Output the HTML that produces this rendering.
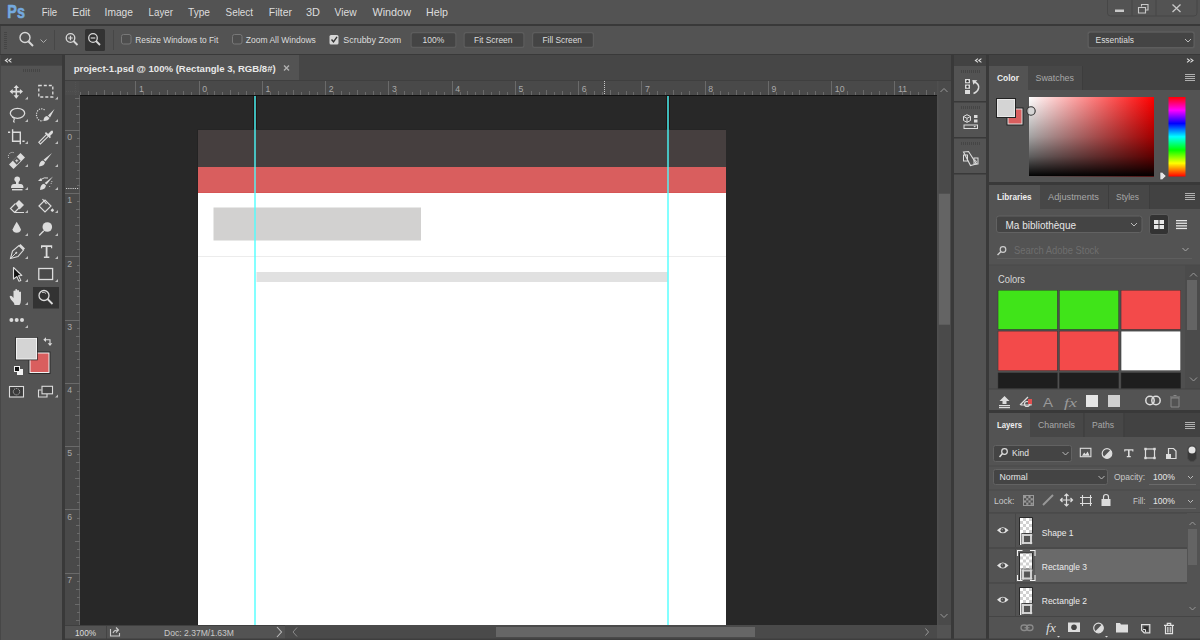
<!DOCTYPE html>
<html><head><meta charset="utf-8"><style>
html,body{margin:0;padding:0;width:1200px;height:640px;overflow:hidden;background:#535353}
svg{display:block;font-family:"Liberation Sans",sans-serif}
</style></head><body>
<svg width="1200" height="640" viewBox="0 0 1200 640" shape-rendering="auto">
<rect x="0" y="0" width="1200" height="640" fill="#535353" />
<rect x="0" y="24" width="1200" height="2" fill="#393939" />
<rect x="0" y="54" width="1200" height="1" fill="#393939" />
<rect x="0" y="26" width="1" height="28" fill="#444" />
<text x="7.3" y="17.6" font-size="18.6" font-weight="700" fill="#74a9de" stroke="#74a9de" stroke-width="0.6" stroke-linejoin="round" textLength="17.6" lengthAdjust="spacingAndGlyphs">Ps</text>
<text x="41.7" y="16" font-size="11.5" fill="#dddddd" textLength="15.5" lengthAdjust="spacingAndGlyphs">File</text>
<text x="72.3" y="16" font-size="11.5" fill="#dddddd" textLength="17.9" lengthAdjust="spacingAndGlyphs">Edit</text>
<text x="104.6" y="16" font-size="11.5" fill="#dddddd" textLength="28.4" lengthAdjust="spacingAndGlyphs">Image</text>
<text x="148.6" y="16" font-size="11.5" fill="#dddddd" textLength="24.4" lengthAdjust="spacingAndGlyphs">Layer</text>
<text x="188" y="16" font-size="11.5" fill="#dddddd" textLength="22" lengthAdjust="spacingAndGlyphs">Type</text>
<text x="225.6" y="16" font-size="11.5" fill="#dddddd" textLength="27.4" lengthAdjust="spacingAndGlyphs">Select</text>
<text x="268.8" y="16" font-size="11.5" fill="#dddddd" textLength="23.2" lengthAdjust="spacingAndGlyphs">Filter</text>
<text x="306" y="16" font-size="11.5" fill="#dddddd" textLength="14" lengthAdjust="spacingAndGlyphs">3D</text>
<text x="334.6" y="16" font-size="11.5" fill="#dddddd" textLength="22.0" lengthAdjust="spacingAndGlyphs">View</text>
<text x="372.4" y="16" font-size="11.5" fill="#dddddd" textLength="38.6" lengthAdjust="spacingAndGlyphs">Window</text>
<text x="426" y="16" font-size="11.5" fill="#dddddd" textLength="22" lengthAdjust="spacingAndGlyphs">Help</text>
<path d="M1107.5 0 V13 Q1107.5 16 1110.5 16 H1194 Q1197 16 1197 13 V0" fill="none" stroke="#474747" stroke-width="1"/>
<rect x="1131.5" y="0" width="1" height="16" fill="#474747" />
<rect x="1155.5" y="0" width="1" height="16" fill="#474747" />
<rect x="1115" y="9.5" width="9" height="2.5" fill="#c8c8c8" />
<path d="M1141.5 6.5 v-2 h6.5 v5.5 h-2 M1138.5 7.5 h7 v5.5 h-7 z" fill="none" stroke="#c8c8c8" stroke-width="1.1"/>
<path d="M1172.5 4.5 L1180.5 12 M1180.5 4.5 L1172.5 12" stroke="#c8c8c8" stroke-width="1.3"/>
<rect x="4" y="32" width="3" height="1" fill="#454545" />
<rect x="4" y="34" width="3" height="1" fill="#454545" />
<rect x="4" y="36" width="3" height="1" fill="#454545" />
<rect x="4" y="38" width="3" height="1" fill="#454545" />
<rect x="4" y="40" width="3" height="1" fill="#454545" />
<rect x="4" y="42" width="3" height="1" fill="#454545" />
<rect x="4" y="44" width="3" height="1" fill="#454545" />
<rect x="4" y="46" width="3" height="1" fill="#454545" />
<rect x="4" y="48" width="3" height="1" fill="#454545" />
<circle cx="25" cy="37.5" r="5" fill="none" stroke="#d8d8d8" stroke-width="1.4"/><path d="M28.5 41.5 L33 46" stroke="#d8d8d8" stroke-width="2"/>
<path d="M40.5 39.5 L43.5 42.5 L46.5 39.5" fill="none" stroke="#aaa" stroke-width="1"/>
<rect x="54" y="30" width="1" height="20" fill="#474747" />
<circle cx="70.5" cy="38" r="4.3" fill="none" stroke="#d8d8d8" stroke-width="1.3"/><path d="M73.5 41 L77.5 45" stroke="#d8d8d8" stroke-width="1.8"/><path d="M68.2 38 h4.6 M70.5 35.7 v4.6" stroke="#d8d8d8" stroke-width="1.2"/>
<rect x="85" y="29" width="20" height="22" fill="#333333" rx="1.5"/>
<circle cx="93" cy="38" r="4.3" fill="none" stroke="#d8d8d8" stroke-width="1.3"/><path d="M96 41 L100 45" stroke="#d8d8d8" stroke-width="1.8"/><path d="M90.7 38 h4.6" stroke="#d8d8d8" stroke-width="1.2"/>
<rect x="113" y="30" width="1" height="20" fill="#474747" />
<rect x="121.5" y="34.5" width="9.5" height="9.5" rx="2" fill="#4e4e4e" stroke="#787878" stroke-width="1"/>
<rect x="232.5" y="34.5" width="9.5" height="9.5" rx="2" fill="#4e4e4e" stroke="#787878" stroke-width="1"/>
<rect x="329.5" y="35" width="9" height="9.5" fill="#d6d6d6" rx="1.5"/>
<path d="M331.5 39.5 L333.5 41.8 L337 36.8" fill="none" stroke="#333" stroke-width="1.4"/>
<text x="135.3" y="43" font-size="9.2" fill="#dddddd" textLength="83" lengthAdjust="spacingAndGlyphs">Resize Windows to Fit</text>
<text x="245.8" y="43" font-size="9.2" fill="#dddddd" textLength="70" lengthAdjust="spacingAndGlyphs">Zoom All Windows</text>
<text x="343.3" y="43" font-size="9.2" fill="#dddddd" textLength="58" lengthAdjust="spacingAndGlyphs">Scrubby Zoom</text>
<rect x="410.5" y="32" width="46.0" height="16" rx="2.5" fill="#5d5d5d"/><rect x="411.7" y="33.2" width="43.6" height="13.6" rx="1.5" fill="#444444"/>
<text x="422.5" y="43" font-size="9.2" fill="#dddddd" textLength="21.7" lengthAdjust="spacingAndGlyphs">100%</text>
<rect x="463.5" y="32" width="61.0" height="16" rx="2.5" fill="#5d5d5d"/><rect x="464.7" y="33.2" width="58.6" height="13.6" rx="1.5" fill="#444444"/>
<text x="474" y="43" font-size="9.2" fill="#dddddd" textLength="38.5" lengthAdjust="spacingAndGlyphs">Fit Screen</text>
<rect x="532" y="32" width="62" height="16" rx="2.5" fill="#5d5d5d"/><rect x="533.2" y="33.2" width="59.6" height="13.6" rx="1.5" fill="#444444"/>
<text x="542.5" y="43" font-size="9.2" fill="#dddddd" textLength="39.5" lengthAdjust="spacingAndGlyphs">Fill Screen</text>
<rect x="1087.4" y="31.3" width="107.4" height="17.2" rx="2.5" fill="#5d5d5d"/><rect x="1088.8" y="32.7" width="104.6" height="14.4" rx="1.5" fill="#444444"/>
<text x="1095.5" y="43" font-size="9.2" fill="#dddddd" textLength="38.5" lengthAdjust="spacingAndGlyphs">Essentials</text>
<path d="M1185 39 L1188 42 L1191 39" fill="none" stroke="#bbb" stroke-width="1"/>
<rect x="0" y="55" width="62" height="11" fill="#424242" />
<path d="M8 58.6 L5.4 60.5 L8 62.4 M11.4 58.6 L8.8 60.5 L11.4 62.4" fill="none" stroke="#e0e0e0" stroke-width="1.05" stroke-linejoin="miter"/>
<rect x="62" y="55" width="3" height="585" fill="#393939" />
<rect x="0" y="55" width="1" height="585" fill="#474747" />
<rect x="0" y="65" width="62" height="1" fill="#474747" />
<rect x="23" y="69" width="1" height="3" fill="#454545" />
<rect x="25" y="69" width="1" height="3" fill="#454545" />
<rect x="27" y="69" width="1" height="3" fill="#454545" />
<rect x="29" y="69" width="1" height="3" fill="#454545" />
<rect x="31" y="69" width="1" height="3" fill="#454545" />
<rect x="33" y="69" width="1" height="3" fill="#454545" />
<rect x="35" y="69" width="1" height="3" fill="#454545" />
<rect x="37" y="69" width="1" height="3" fill="#454545" />
<rect x="39" y="69" width="1" height="3" fill="#454545" />
<rect x="65" y="55" width="886" height="25" fill="#464646" />
<rect x="65" y="55" width="234" height="25" fill="#535353" />
<text x="73.7" y="71.6" font-size="9.6" fill="#e8e8e8" textLength="202" lengthAdjust="spacingAndGlyphs" font-weight="700">project-1.psd @ 100% (Rectangle 3, RGB/8#)</text>
<path d="M284 65.5 L289 70.5 M289 65.5 L284 70.5" stroke="#b0b0b0" stroke-width="1.4"/>
<rect x="65" y="80" width="886" height="1" fill="#3f3f3f" />
<rect x="65" y="81" width="872" height="14" fill="#494949" />
<rect x="65" y="81" width="15" height="544" fill="#494949" />
<rect x="80" y="95" width="857" height="1" fill="#111" />
<rect x="65" y="81" width="14.5" height="14" fill="#4c4c4c" />
<path d="M66 91.5 H79 M75.5 82 V95" stroke="#525252" stroke-width="1" stroke-dasharray="1 1"/>
<rect x="79" y="95" width="1" height="530" fill="#5f5f5f" />
<rect x="80" y="96" width="857" height="529" fill="#282828" />
<rect x="80" y="92" width="1" height="3" fill="#6a6a6a" />
<rect x="88" y="91" width="1" height="4" fill="#6a6a6a" />
<rect x="96" y="92" width="1" height="3" fill="#6a6a6a" />
<rect x="104" y="90" width="1" height="5" fill="#6a6a6a" />
<rect x="112" y="92" width="1" height="3" fill="#6a6a6a" />
<rect x="120" y="91" width="1" height="4" fill="#6a6a6a" />
<rect x="127" y="92" width="1" height="3" fill="#6a6a6a" />
<rect x="135" y="81" width="1" height="14" fill="#6a6a6a" />
<rect x="143" y="92" width="1" height="3" fill="#6a6a6a" />
<rect x="151" y="91" width="1" height="4" fill="#6a6a6a" />
<rect x="159" y="92" width="1" height="3" fill="#6a6a6a" />
<rect x="167" y="90" width="1" height="5" fill="#6a6a6a" />
<rect x="175" y="92" width="1" height="3" fill="#6a6a6a" />
<rect x="183" y="91" width="1" height="4" fill="#6a6a6a" />
<rect x="191" y="92" width="1" height="3" fill="#6a6a6a" />
<text x="139.05" y="92.3" font-size="8.7" fill="#a8a8a8">1</text>
<rect x="199" y="81" width="1" height="14" fill="#6a6a6a" />
<rect x="207" y="92" width="1" height="3" fill="#6a6a6a" />
<rect x="214" y="91" width="1" height="4" fill="#6a6a6a" />
<rect x="222" y="92" width="1" height="3" fill="#6a6a6a" />
<rect x="230" y="90" width="1" height="5" fill="#6a6a6a" />
<rect x="238" y="92" width="1" height="3" fill="#6a6a6a" />
<rect x="246" y="91" width="1" height="4" fill="#6a6a6a" />
<rect x="254" y="92" width="1" height="3" fill="#6a6a6a" />
<text x="202.3" y="92.3" font-size="8.7" fill="#a8a8a8">0</text>
<rect x="262" y="81" width="1" height="14" fill="#6a6a6a" />
<rect x="270" y="92" width="1" height="3" fill="#6a6a6a" />
<rect x="278" y="91" width="1" height="4" fill="#6a6a6a" />
<rect x="286" y="92" width="1" height="3" fill="#6a6a6a" />
<rect x="293" y="90" width="1" height="5" fill="#6a6a6a" />
<rect x="301" y="92" width="1" height="3" fill="#6a6a6a" />
<rect x="309" y="91" width="1" height="4" fill="#6a6a6a" />
<rect x="317" y="92" width="1" height="3" fill="#6a6a6a" />
<text x="265.55" y="92.3" font-size="8.7" fill="#a8a8a8">1</text>
<rect x="325" y="81" width="1" height="14" fill="#6a6a6a" />
<rect x="333" y="92" width="1" height="3" fill="#6a6a6a" />
<rect x="341" y="91" width="1" height="4" fill="#6a6a6a" />
<rect x="349" y="92" width="1" height="3" fill="#6a6a6a" />
<rect x="357" y="90" width="1" height="5" fill="#6a6a6a" />
<rect x="365" y="92" width="1" height="3" fill="#6a6a6a" />
<rect x="373" y="91" width="1" height="4" fill="#6a6a6a" />
<rect x="380" y="92" width="1" height="3" fill="#6a6a6a" />
<text x="328.8" y="92.3" font-size="8.7" fill="#a8a8a8">2</text>
<rect x="388" y="81" width="1" height="14" fill="#6a6a6a" />
<rect x="396" y="92" width="1" height="3" fill="#6a6a6a" />
<rect x="404" y="91" width="1" height="4" fill="#6a6a6a" />
<rect x="412" y="92" width="1" height="3" fill="#6a6a6a" />
<rect x="420" y="90" width="1" height="5" fill="#6a6a6a" />
<rect x="428" y="92" width="1" height="3" fill="#6a6a6a" />
<rect x="436" y="91" width="1" height="4" fill="#6a6a6a" />
<rect x="444" y="92" width="1" height="3" fill="#6a6a6a" />
<text x="392.05" y="92.3" font-size="8.7" fill="#a8a8a8">3</text>
<rect x="452" y="81" width="1" height="14" fill="#6a6a6a" />
<rect x="460" y="92" width="1" height="3" fill="#6a6a6a" />
<rect x="467" y="91" width="1" height="4" fill="#6a6a6a" />
<rect x="475" y="92" width="1" height="3" fill="#6a6a6a" />
<rect x="483" y="90" width="1" height="5" fill="#6a6a6a" />
<rect x="491" y="92" width="1" height="3" fill="#6a6a6a" />
<rect x="499" y="91" width="1" height="4" fill="#6a6a6a" />
<rect x="507" y="92" width="1" height="3" fill="#6a6a6a" />
<text x="455.3" y="92.3" font-size="8.7" fill="#a8a8a8">4</text>
<rect x="515" y="81" width="1" height="14" fill="#6a6a6a" />
<rect x="523" y="92" width="1" height="3" fill="#6a6a6a" />
<rect x="531" y="91" width="1" height="4" fill="#6a6a6a" />
<rect x="539" y="92" width="1" height="3" fill="#6a6a6a" />
<rect x="546" y="90" width="1" height="5" fill="#6a6a6a" />
<rect x="554" y="92" width="1" height="3" fill="#6a6a6a" />
<rect x="562" y="91" width="1" height="4" fill="#6a6a6a" />
<rect x="570" y="92" width="1" height="3" fill="#6a6a6a" />
<text x="518.55" y="92.3" font-size="8.7" fill="#a8a8a8">5</text>
<rect x="578" y="81" width="1" height="14" fill="#6a6a6a" />
<rect x="586" y="92" width="1" height="3" fill="#6a6a6a" />
<rect x="594" y="91" width="1" height="4" fill="#6a6a6a" />
<rect x="602" y="92" width="1" height="3" fill="#6a6a6a" />
<rect x="610" y="90" width="1" height="5" fill="#6a6a6a" />
<rect x="618" y="92" width="1" height="3" fill="#6a6a6a" />
<rect x="626" y="91" width="1" height="4" fill="#6a6a6a" />
<rect x="633" y="92" width="1" height="3" fill="#6a6a6a" />
<text x="581.8" y="92.3" font-size="8.7" fill="#a8a8a8">6</text>
<rect x="641" y="81" width="1" height="14" fill="#6a6a6a" />
<rect x="649" y="92" width="1" height="3" fill="#6a6a6a" />
<rect x="657" y="91" width="1" height="4" fill="#6a6a6a" />
<rect x="665" y="92" width="1" height="3" fill="#6a6a6a" />
<rect x="673" y="90" width="1" height="5" fill="#6a6a6a" />
<rect x="681" y="92" width="1" height="3" fill="#6a6a6a" />
<rect x="689" y="91" width="1" height="4" fill="#6a6a6a" />
<rect x="697" y="92" width="1" height="3" fill="#6a6a6a" />
<text x="645.05" y="92.3" font-size="8.7" fill="#a8a8a8">7</text>
<rect x="705" y="81" width="1" height="14" fill="#6a6a6a" />
<rect x="713" y="92" width="1" height="3" fill="#6a6a6a" />
<rect x="720" y="91" width="1" height="4" fill="#6a6a6a" />
<rect x="728" y="92" width="1" height="3" fill="#6a6a6a" />
<rect x="736" y="90" width="1" height="5" fill="#6a6a6a" />
<rect x="744" y="92" width="1" height="3" fill="#6a6a6a" />
<rect x="752" y="91" width="1" height="4" fill="#6a6a6a" />
<rect x="760" y="92" width="1" height="3" fill="#6a6a6a" />
<text x="708.3" y="92.3" font-size="8.7" fill="#a8a8a8">8</text>
<rect x="768" y="81" width="1" height="14" fill="#6a6a6a" />
<rect x="776" y="92" width="1" height="3" fill="#6a6a6a" />
<rect x="784" y="91" width="1" height="4" fill="#6a6a6a" />
<rect x="792" y="92" width="1" height="3" fill="#6a6a6a" />
<rect x="799" y="90" width="1" height="5" fill="#6a6a6a" />
<rect x="807" y="92" width="1" height="3" fill="#6a6a6a" />
<rect x="815" y="91" width="1" height="4" fill="#6a6a6a" />
<rect x="823" y="92" width="1" height="3" fill="#6a6a6a" />
<text x="771.55" y="92.3" font-size="8.7" fill="#a8a8a8">9</text>
<rect x="831" y="81" width="1" height="14" fill="#6a6a6a" />
<rect x="839" y="92" width="1" height="3" fill="#6a6a6a" />
<rect x="847" y="91" width="1" height="4" fill="#6a6a6a" />
<rect x="855" y="92" width="1" height="3" fill="#6a6a6a" />
<rect x="863" y="90" width="1" height="5" fill="#6a6a6a" />
<rect x="871" y="92" width="1" height="3" fill="#6a6a6a" />
<rect x="879" y="91" width="1" height="4" fill="#6a6a6a" />
<rect x="886" y="92" width="1" height="3" fill="#6a6a6a" />
<text x="834.8" y="92.3" font-size="8.7" fill="#a8a8a8">10</text>
<rect x="894" y="81" width="1" height="14" fill="#6a6a6a" />
<rect x="902" y="92" width="1" height="3" fill="#6a6a6a" />
<rect x="910" y="91" width="1" height="4" fill="#6a6a6a" />
<rect x="918" y="92" width="1" height="3" fill="#6a6a6a" />
<rect x="926" y="90" width="1" height="5" fill="#6a6a6a" />
<rect x="934" y="92" width="1" height="3" fill="#6a6a6a" />
<text x="898.05" y="92.3" font-size="8.7" fill="#a8a8a8">11</text>
<path d="M604.5 81 V95" stroke="#c8c8c8" stroke-width="1" stroke-dasharray="1 1"/>
<rect x="75" y="98" width="5" height="1" fill="#6a6a6a" />
<rect x="77" y="106" width="3" height="1" fill="#6a6a6a" />
<rect x="76" y="114" width="4" height="1" fill="#6a6a6a" />
<rect x="77" y="122" width="3" height="1" fill="#6a6a6a" />
<rect x="65" y="130" width="15" height="1" fill="#6a6a6a" />
<rect x="77" y="138" width="3" height="1" fill="#6a6a6a" />
<rect x="76" y="146" width="4" height="1" fill="#6a6a6a" />
<rect x="77" y="154" width="3" height="1" fill="#6a6a6a" />
<rect x="75" y="162" width="5" height="1" fill="#6a6a6a" />
<rect x="77" y="170" width="3" height="1" fill="#6a6a6a" />
<rect x="76" y="178" width="4" height="1" fill="#6a6a6a" />
<rect x="77" y="185" width="3" height="1" fill="#6a6a6a" />
<text x="67.3" y="140.10000000000002" font-size="8.7" fill="#a8a8a8">0</text>
<rect x="65" y="193" width="15" height="1" fill="#6a6a6a" />
<rect x="77" y="201" width="3" height="1" fill="#6a6a6a" />
<rect x="76" y="209" width="4" height="1" fill="#6a6a6a" />
<rect x="77" y="217" width="3" height="1" fill="#6a6a6a" />
<rect x="75" y="225" width="5" height="1" fill="#6a6a6a" />
<rect x="77" y="233" width="3" height="1" fill="#6a6a6a" />
<rect x="76" y="241" width="4" height="1" fill="#6a6a6a" />
<rect x="77" y="249" width="3" height="1" fill="#6a6a6a" />
<text x="67.3" y="203.35000000000002" font-size="8.7" fill="#a8a8a8">1</text>
<rect x="65" y="256" width="15" height="1" fill="#6a6a6a" />
<rect x="77" y="265" width="3" height="1" fill="#6a6a6a" />
<rect x="76" y="272" width="4" height="1" fill="#6a6a6a" />
<rect x="77" y="280" width="3" height="1" fill="#6a6a6a" />
<rect x="75" y="288" width="5" height="1" fill="#6a6a6a" />
<rect x="77" y="296" width="3" height="1" fill="#6a6a6a" />
<rect x="76" y="304" width="4" height="1" fill="#6a6a6a" />
<rect x="77" y="312" width="3" height="1" fill="#6a6a6a" />
<text x="67.3" y="266.6" font-size="8.7" fill="#a8a8a8">2</text>
<rect x="65" y="320" width="15" height="1" fill="#6a6a6a" />
<rect x="77" y="328" width="3" height="1" fill="#6a6a6a" />
<rect x="76" y="336" width="4" height="1" fill="#6a6a6a" />
<rect x="77" y="344" width="3" height="1" fill="#6a6a6a" />
<rect x="75" y="351" width="5" height="1" fill="#6a6a6a" />
<rect x="77" y="359" width="3" height="1" fill="#6a6a6a" />
<rect x="76" y="367" width="4" height="1" fill="#6a6a6a" />
<rect x="77" y="375" width="3" height="1" fill="#6a6a6a" />
<text x="67.3" y="329.85" font-size="8.7" fill="#a8a8a8">3</text>
<rect x="65" y="383" width="15" height="1" fill="#6a6a6a" />
<rect x="77" y="391" width="3" height="1" fill="#6a6a6a" />
<rect x="76" y="399" width="4" height="1" fill="#6a6a6a" />
<rect x="77" y="407" width="3" height="1" fill="#6a6a6a" />
<rect x="75" y="415" width="5" height="1" fill="#6a6a6a" />
<rect x="77" y="423" width="3" height="1" fill="#6a6a6a" />
<rect x="76" y="431" width="4" height="1" fill="#6a6a6a" />
<rect x="77" y="438" width="3" height="1" fill="#6a6a6a" />
<text x="67.3" y="393.1" font-size="8.7" fill="#a8a8a8">4</text>
<rect x="65" y="446" width="15" height="1" fill="#6a6a6a" />
<rect x="77" y="454" width="3" height="1" fill="#6a6a6a" />
<rect x="76" y="462" width="4" height="1" fill="#6a6a6a" />
<rect x="77" y="470" width="3" height="1" fill="#6a6a6a" />
<rect x="75" y="478" width="5" height="1" fill="#6a6a6a" />
<rect x="77" y="486" width="3" height="1" fill="#6a6a6a" />
<rect x="76" y="494" width="4" height="1" fill="#6a6a6a" />
<rect x="77" y="502" width="3" height="1" fill="#6a6a6a" />
<text x="67.3" y="456.35" font-size="8.7" fill="#a8a8a8">5</text>
<rect x="65" y="509" width="15" height="1" fill="#6a6a6a" />
<rect x="77" y="518" width="3" height="1" fill="#6a6a6a" />
<rect x="76" y="525" width="4" height="1" fill="#6a6a6a" />
<rect x="77" y="533" width="3" height="1" fill="#6a6a6a" />
<rect x="75" y="541" width="5" height="1" fill="#6a6a6a" />
<rect x="77" y="549" width="3" height="1" fill="#6a6a6a" />
<rect x="76" y="557" width="4" height="1" fill="#6a6a6a" />
<rect x="77" y="565" width="3" height="1" fill="#6a6a6a" />
<text x="67.3" y="519.6" font-size="8.7" fill="#a8a8a8">6</text>
<rect x="65" y="573" width="15" height="1" fill="#6a6a6a" />
<rect x="77" y="581" width="3" height="1" fill="#6a6a6a" />
<rect x="76" y="589" width="4" height="1" fill="#6a6a6a" />
<rect x="77" y="597" width="3" height="1" fill="#6a6a6a" />
<rect x="75" y="604" width="5" height="1" fill="#6a6a6a" />
<rect x="77" y="612" width="3" height="1" fill="#6a6a6a" />
<rect x="76" y="620" width="4" height="1" fill="#6a6a6a" />
<text x="67.3" y="582.8499999999999" font-size="8.7" fill="#a8a8a8">7</text>
<path d="M66 188.5 H79" stroke="#c8c8c8" stroke-width="1" stroke-dasharray="1.2 1"/>
<rect x="197" y="129" width="1" height="496" fill="#232323" />
<rect x="197" y="129" width="529" height="1" fill="#252525" />
<rect x="198" y="130" width="528" height="495" fill="#ffffff" />
<rect x="198" y="130" width="528" height="37" fill="#463f3f" />
<rect x="198" y="167" width="528" height="26" fill="#d95e5e" />
<rect x="198" y="192" width="528" height="1" fill="#d65555" />
<rect x="213.5" y="207.5" width="207.5" height="33" fill="#d2d1d0" />
<rect x="198" y="256" width="528" height="1" fill="#ececec" />
<rect x="256.5" y="272" width="411" height="10" fill="#e1e1e1" />
<rect x="254" y="96" width="2" height="529" fill="#4affff" fill-opacity="0.68"/>
<rect x="667" y="96" width="2" height="529" fill="#4affff" fill-opacity="0.68"/>
<rect x="253" y="96" width="1" height="33" fill="#241414" />
<rect x="256" y="96" width="1" height="33" fill="#241414" />
<rect x="666" y="96" width="1" height="33" fill="#241414" />
<rect x="669" y="96" width="1" height="33" fill="#241414" />
<rect x="937" y="81" width="14" height="544" fill="#4a4a4a" />
<rect x="937" y="81" width="1.5" height="544" fill="#4f4f4f" />
<path d="M940.5 92 L944 88.5 L947.5 92" fill="none" stroke="#999" stroke-width="1"/>
<rect x="938.8" y="193.7" width="11.2" height="131" fill="#646464" />
<path d="M940.5 614 L944 617.5 L947.5 614" fill="none" stroke="#999" stroke-width="1"/>
<rect x="65" y="625" width="886" height="15" fill="#535353" />
<rect x="65" y="625" width="886" height="1" fill="#3f3f3f" />
<text x="75" y="636" font-size="9" fill="#dddddd" textLength="21" lengthAdjust="spacingAndGlyphs">100%</text>
<rect x="106" y="626" width="1" height="14" fill="#444" />
<path d="M110.5 629 v7 h9 v-3 M113 633 q1 -3 5 -3 M116 627.5 l2.5 2.5 l-2.5 2.5" fill="none" stroke="#ccc" stroke-width="1.1"/>
<text x="164" y="636" font-size="9" fill="#c8c8c8" textLength="70" lengthAdjust="spacingAndGlyphs">Doc: 2.37M/1.63M</text>
<path d="M277 627 L281.5 632 L277 637" fill="none" stroke="#bbb" stroke-width="1.1"/>
<rect x="285" y="625" width="652" height="15" fill="#4a4a4a" />
<rect x="937" y="625" width="14" height="15" fill="#535353" />
<path d="M297 627.5 L293 632 L297 636.5" fill="none" stroke="#888" stroke-width="1"/>
<rect x="496" y="627" width="259" height="10" fill="#666666" />
<path d="M925.5 628.5 L928.5 632 L925.5 635.5" fill="none" stroke="#999" stroke-width="1"/>
<rect x="951" y="55" width="3" height="585" fill="#393939" />
<rect x="954" y="55" width="32" height="11" fill="#424242" />
<path d="M978 58.6 L975.4 60.5 L978 62.4 M981.4 58.6 L978.8 60.5 L981.4 62.4" fill="none" stroke="#e0e0e0" stroke-width="1.05" stroke-linejoin="miter"/>
<rect x="986" y="55" width="3" height="585" fill="#393939" />
<rect x="954" y="101" width="32" height="1.5" fill="#393939" />
<rect x="954" y="137" width="32" height="1.5" fill="#393939" />
<rect x="954" y="173" width="32" height="1.5" fill="#393939" />
<rect x="961" y="70" width="1" height="3" fill="#454545" />
<rect x="963" y="70" width="1" height="3" fill="#454545" />
<rect x="965" y="70" width="1" height="3" fill="#454545" />
<rect x="967" y="70" width="1" height="3" fill="#454545" />
<rect x="969" y="70" width="1" height="3" fill="#454545" />
<rect x="971" y="70" width="1" height="3" fill="#454545" />
<rect x="973" y="70" width="1" height="3" fill="#454545" />
<rect x="975" y="70" width="1" height="3" fill="#454545" />
<rect x="977" y="70" width="1" height="3" fill="#454545" />
<rect x="979" y="70" width="1" height="3" fill="#454545" />
<rect x="961" y="106" width="1" height="3" fill="#454545" />
<rect x="963" y="106" width="1" height="3" fill="#454545" />
<rect x="965" y="106" width="1" height="3" fill="#454545" />
<rect x="967" y="106" width="1" height="3" fill="#454545" />
<rect x="969" y="106" width="1" height="3" fill="#454545" />
<rect x="971" y="106" width="1" height="3" fill="#454545" />
<rect x="973" y="106" width="1" height="3" fill="#454545" />
<rect x="975" y="106" width="1" height="3" fill="#454545" />
<rect x="977" y="106" width="1" height="3" fill="#454545" />
<rect x="979" y="106" width="1" height="3" fill="#454545" />
<rect x="961" y="142" width="1" height="3" fill="#454545" />
<rect x="963" y="142" width="1" height="3" fill="#454545" />
<rect x="965" y="142" width="1" height="3" fill="#454545" />
<rect x="967" y="142" width="1" height="3" fill="#454545" />
<rect x="969" y="142" width="1" height="3" fill="#454545" />
<rect x="971" y="142" width="1" height="3" fill="#454545" />
<rect x="973" y="142" width="1" height="3" fill="#454545" />
<rect x="975" y="142" width="1" height="3" fill="#454545" />
<rect x="977" y="142" width="1" height="3" fill="#454545" />
<rect x="979" y="142" width="1" height="3" fill="#454545" />
<rect x="989" y="55" width="211" height="11" fill="#424242" />
<path d="M1187 58.6 L1189.6 60.5 L1187 62.4 M1190.4 58.6 L1193 60.5 L1190.4 62.4" fill="none" stroke="#e0e0e0" stroke-width="1.05" stroke-linejoin="miter"/>
<rect x="989" y="66" width="211" height="24" fill="#424242" />
<rect x="989" y="66" width="39" height="24" fill="#535353" />
<rect x="1028" y="66" width="54" height="24" fill="#474747" />
<rect x="1082" y="66" width="1" height="24" fill="#3d3d3d" />
<text x="997" y="81" font-size="9.5" fill="#eeeeee" textLength="22" lengthAdjust="spacingAndGlyphs" font-weight="700">Color</text>
<text x="1035.5" y="81" font-size="9.5" fill="#a8a8a8" textLength="38.5" lengthAdjust="spacingAndGlyphs">Swatches</text>
<rect x="1185" y="74" width="10" height="1" fill="#b0b0b0" />
<rect x="1185" y="76" width="10" height="1" fill="#b0b0b0" />
<rect x="1185" y="78" width="10" height="1" fill="#b0b0b0" />
<rect x="1185" y="80" width="10" height="1" fill="#b0b0b0" />
<rect x="1006.5" y="107.5" width="17" height="18" fill="#222" />
<rect x="1007.5" y="108.5" width="15" height="16" fill="#e0e0e0" />
<rect x="1008.5" y="109.5" width="13" height="14" fill="#d95e5e" />
<rect x="996" y="98" width="20" height="20" fill="#222" />
<rect x="997" y="99" width="18" height="18" fill="#e8e8e8" />
<rect x="998" y="100" width="16" height="16" fill="#d4d4d4" />
<defs><linearGradient id="gh" x1="0" y1="0" x2="1" y2="0"><stop offset="0" stop-color="#fff"/><stop offset="1" stop-color="#f00"/></linearGradient><linearGradient id="gv" x1="0" y1="0" x2="0" y2="1"><stop offset="0" stop-color="#000" stop-opacity="0"/><stop offset="0.25" stop-color="#000" stop-opacity="0.17"/><stop offset="0.5" stop-color="#000" stop-opacity="0.36"/><stop offset="0.75" stop-color="#000" stop-opacity="0.63"/><stop offset="1" stop-color="#000"/></linearGradient><linearGradient id="hue" x1="0" y1="0" x2="0" y2="1"><stop offset="0" stop-color="#f00"/><stop offset="0.167" stop-color="#f0f"/><stop offset="0.333" stop-color="#00f"/><stop offset="0.5" stop-color="#0ff"/><stop offset="0.667" stop-color="#0f0"/><stop offset="0.833" stop-color="#ff0"/><stop offset="1" stop-color="#f00"/></linearGradient></defs>
<rect x="1029" y="97" width="125" height="79.5" fill="url(#gh)" />
<rect x="1029" y="97" width="125" height="79.5" fill="url(#gv)" />
<rect x="1168.5" y="97" width="17" height="79.5" fill="url(#hue)" />
<circle cx="1031" cy="111" r="4.2" fill="#d4d4d4" fill-opacity="0.85" stroke="#2e2e2e" stroke-width="1.1"/>
<path d="M1160 172.3 h2.2 l4 3.7 l-4 3.7 h-2.2 z" fill="#e6e6e6" stroke="#444" stroke-width="0.6"/>
<rect x="989" y="182" width="211" height="3" fill="#393939" />
<rect x="989" y="185" width="211" height="24" fill="#424242" />
<rect x="989" y="185" width="51" height="24" fill="#535353" />
<rect x="1040" y="185" width="68" height="24" fill="#474747" />
<rect x="1108" y="185" width="41" height="24" fill="#474747" />
<rect x="1108" y="185" width="1" height="24" fill="#3d3d3d" />
<rect x="1149" y="185" width="1" height="24" fill="#3d3d3d" />
<text x="997" y="200" font-size="9.5" fill="#eeeeee" textLength="34.5" lengthAdjust="spacingAndGlyphs" font-weight="700">Libraries</text>
<text x="1048" y="200" font-size="9.5" fill="#a8a8a8" textLength="51" lengthAdjust="spacingAndGlyphs">Adjustments</text>
<text x="1116" y="200" font-size="9.5" fill="#a8a8a8" textLength="23" lengthAdjust="spacingAndGlyphs">Styles</text>
<rect x="1185" y="193" width="10" height="1" fill="#b0b0b0" />
<rect x="1185" y="195" width="10" height="1" fill="#b0b0b0" />
<rect x="1185" y="197" width="10" height="1" fill="#b0b0b0" />
<rect x="1185" y="199" width="10" height="1" fill="#b0b0b0" />
<rect x="996.5" y="216" width="145.5" height="16.5" rx="2.5" fill="#444444" stroke="#626262" stroke-width="1"/>
<text x="1005.5" y="229" font-size="10" fill="#e6e6e6" textLength="70.5" lengthAdjust="spacingAndGlyphs">Ma bibliothèque</text>
<path d="M1131 223 L1134 226 L1137 223" fill="none" stroke="#bbb" stroke-width="1"/>
<rect x="1149.5" y="214.5" width="19" height="20" rx="2.5" fill="#333" stroke="#5c5c5c" stroke-width="1"/>
<rect x="1154" y="220" width="4.5" height="4" fill="#e6e6e6" />
<rect x="1159.5" y="220" width="4.5" height="4" fill="#e6e6e6" />
<rect x="1154" y="225" width="4.5" height="4" fill="#e6e6e6" />
<rect x="1159.5" y="225" width="4.5" height="4" fill="#e6e6e6" />
<rect x="1176" y="220.0" width="11" height="1.3" fill="#e6e6e6" />
<rect x="1176" y="222.6" width="11" height="1.3" fill="#e6e6e6" />
<rect x="1176" y="225.2" width="11" height="1.3" fill="#e6e6e6" />
<rect x="1176" y="227.8" width="11" height="1.3" fill="#e6e6e6" />
<circle cx="1003" cy="249.5" r="2.8" fill="none" stroke="#ccc" stroke-width="1.2"/><path d="M1001 251.5 L997.5 255" stroke="#ccc" stroke-width="1.5"/>
<text x="1014" y="254" font-size="10" fill="#6e6e6e" textLength="85" lengthAdjust="spacingAndGlyphs">Search Adobe Stock</text>
<path d="M1182.5 248 L1185.5 251 L1188.5 248" fill="none" stroke="#aaa" stroke-width="1"/>
<rect x="997" y="258" width="195" height="1" fill="#5e5e5e" />
<rect x="989" y="265" width="211" height="124" fill="#4f4f4f" />
<text x="998" y="283" font-size="10" fill="#d8d8d8" textLength="27" lengthAdjust="spacingAndGlyphs">Colors</text>
<rect x="1185" y="265" width="15" height="124" fill="#4b4b4b" />
<rect x="989" y="264.5" width="211" height="1" fill="#4a4a4a" />
<path d="M1190 276.5 L1193.5 273 L1197 276.5" fill="none" stroke="#999" stroke-width="1"/>
<rect x="1187" y="280" width="10" height="50" fill="#646464" />
<path d="M1190 377.5 L1193.5 381 L1197 377.5" fill="none" stroke="#999" stroke-width="1"/>
<rect x="997.8" y="290.0" width="59.90000000000009" height="39.69999999999999" fill="#333" />
<rect x="998.3" y="290.5" width="58.90000000000009" height="38.69999999999999" fill="#40e419" />
<rect x="1059.1" y="290.0" width="59.80000000000018" height="39.69999999999999" fill="#333" />
<rect x="1059.6" y="290.5" width="58.80000000000018" height="38.69999999999999" fill="#40e419" />
<rect x="1120.8" y="290.0" width="60.100000000000136" height="39.69999999999999" fill="#333" />
<rect x="1121.3" y="290.5" width="59.100000000000136" height="38.69999999999999" fill="#f34a4a" />
<rect x="997.8" y="330.9" width="59.90000000000009" height="40.0" fill="#333" />
<rect x="998.3" y="331.4" width="58.90000000000009" height="39.0" fill="#f34a4a" />
<rect x="1059.1" y="330.9" width="59.80000000000018" height="40.0" fill="#333" />
<rect x="1059.6" y="331.4" width="58.80000000000018" height="39.0" fill="#f34a4a" />
<rect x="1120.8" y="330.9" width="60.100000000000136" height="40.0" fill="#333" />
<rect x="1121.3" y="331.4" width="59.100000000000136" height="39.0" fill="#ffffff" />
<rect x="997.8" y="372.5" width="59.90000000000009" height="16.5" fill="#333" />
<rect x="998.3" y="373" width="58.90000000000009" height="15.5" fill="#1e1e1e" />
<rect x="1059.1" y="372.5" width="59.80000000000018" height="16.5" fill="#333" />
<rect x="1059.6" y="373" width="58.80000000000018" height="15.5" fill="#1e1e1e" />
<rect x="1120.8" y="372.5" width="60.100000000000136" height="16.5" fill="#333" />
<rect x="1121.3" y="373" width="59.100000000000136" height="15.5" fill="#1e1e1e" />
<rect x="989" y="389" width="211" height="21" fill="#535353" />
<rect x="989" y="388.5" width="211" height="1" fill="#454545" />
<path d="M1004.5 396 L999.5 401 H1002.5 V404 H1006.5 V401 H1009.5 Z" fill="#ddd"/><rect x="999" y="405" width="11" height="1.2" fill="#ddd"/><rect x="999" y="407" width="11" height="1.2" fill="#ddd"/>
<path d="M1020 405 L1028 397 M1021 405 h10 v-6" fill="none" stroke="#ddd" stroke-width="1.2"/><circle cx="1027" cy="404" r="2.5" fill="none" stroke="#ddd" stroke-width="1.2"/><rect x="1028" y="399" width="4" height="5" fill="#e05050"/>
<text x="1043" y="407" font-size="13" fill="#9a9a9a" textLength="10" lengthAdjust="spacingAndGlyphs">A</text>
<text x="1064" y="407" font-size="13" font-style="italic" fill="#9a9a9a" font-family="Liberation Serif" textLength="13" lengthAdjust="spacingAndGlyphs">fx</text>
<rect x="1086" y="395" width="12" height="12" fill="#e6e6e6" />
<rect x="1108" y="395" width="12" height="12" fill="#d0d0d0" />
<circle cx="1150" cy="400.5" r="4.2" fill="none" stroke="#ddd" stroke-width="1.5"/><circle cx="1156" cy="400.5" r="4.2" fill="none" stroke="#ddd" stroke-width="1.5"/>
<path d="M1171 398 h8 v9 h-8 z M1170 397 h10 M1173.5 395.5 h3" fill="none" stroke="#888" stroke-width="1"/>
<rect x="989" y="410" width="211" height="3" fill="#393939" />
<rect x="989" y="413" width="211" height="24" fill="#424242" />
<rect x="989" y="413" width="41" height="24" fill="#535353" />
<rect x="1030" y="413" width="53.5" height="24" fill="#474747" />
<rect x="1083.5" y="413" width="40" height="24" fill="#474747" />
<rect x="1083.5" y="413" width="1" height="24" fill="#3d3d3d" />
<rect x="1123.5" y="413" width="1" height="24" fill="#3d3d3d" />
<text x="997" y="428" font-size="9.5" fill="#eeeeee" textLength="25" lengthAdjust="spacingAndGlyphs" font-weight="700">Layers</text>
<text x="1038" y="428" font-size="9.5" fill="#a8a8a8" textLength="37" lengthAdjust="spacingAndGlyphs">Channels</text>
<text x="1092" y="428" font-size="9.5" fill="#a8a8a8" textLength="22" lengthAdjust="spacingAndGlyphs">Paths</text>
<rect x="1185" y="422" width="10" height="1" fill="#b0b0b0" />
<rect x="1185" y="424" width="10" height="1" fill="#b0b0b0" />
<rect x="1185" y="426" width="10" height="1" fill="#b0b0b0" />
<rect x="1185" y="428" width="10" height="1" fill="#b0b0b0" />
<rect x="993.5" y="445.5" width="78" height="16" rx="2" fill="#444444" stroke="#626262"/>
<circle cx="1004.5" cy="451.5" r="2.8" fill="none" stroke="#ddd" stroke-width="1.2"/><path d="M1002.5 453.5 L999.5 457" stroke="#ddd" stroke-width="1.5"/>
<text x="1012" y="456" font-size="9.5" fill="#e6e6e6" textLength="17" lengthAdjust="spacingAndGlyphs">Kind</text>
<path d="M1062.5 452 L1065.5 455 L1068.5 452" fill="none" stroke="#bbb" stroke-width="1"/>
<rect x="1080.3" y="448.3" width="10.6" height="8.4" fill="none" stroke="#ddd" stroke-width="1.1"/><path d="M1082 455.8 l2.2 -3.2 l1.6 1.6 l1.8 -2.6 l2 4.2 z" fill="#ddd"/>
<circle cx="1107" cy="453.5" r="4.8" fill="none" stroke="#ddd" stroke-width="1.2"/><path d="M1103.6 456.9 A4.8 4.8 0 0 0 1110.4 450.1 Z" fill="#ddd"/>
<path d="M1124.2 449.2 H1133.4 V451.6 H1132.3 V450.6 H1129.6 V456 H1130.8 V457.3 H1126.8 V456 H1128 V450.6 H1125.3 V451.6 H1124.2 Z" fill="#ddd"/>
<rect x="1145.5" y="449" width="9" height="9" fill="none" stroke="#ddd" stroke-width="1.2"/><rect x="1144.3" y="447.8" width="2.4" height="2.4" fill="#ddd"/><rect x="1153.3" y="447.8" width="2.4" height="2.4" fill="#ddd"/><rect x="1144.3" y="456.8" width="2.4" height="2.4" fill="#ddd"/><rect x="1153.3" y="456.8" width="2.4" height="2.4" fill="#ddd"/>
<path d="M1168.5 448.5 h5 l2.5 2.5 v7.5 h-7.5 z" fill="none" stroke="#ddd" stroke-width="1.2"/><rect x="1166" y="454" width="5" height="5" fill="#ddd"/>
<rect x="1187.5" y="445.5" width="9" height="16" rx="4.5" fill="#3a3a3a" stroke="#4a4a4a"/><circle cx="1192" cy="450" r="3.5" fill="#e6e6e6"/>
<rect x="989" y="465.5" width="211" height="1" fill="#4a4a4a" />
<rect x="993.5" y="469.5" width="114" height="15" rx="2" fill="#444444" stroke="#626262"/>
<text x="999.6" y="480.1" font-size="9.5" fill="#e6e6e6" textLength="28" lengthAdjust="spacingAndGlyphs">Normal</text>
<path d="M1098.5 476 L1101.5 479 L1104.5 476" fill="none" stroke="#bbb" stroke-width="1"/>
<text x="1114" y="480.2" font-size="9.5" fill="#c8c8c8" textLength="31" lengthAdjust="spacingAndGlyphs">Opacity:</text>
<text x="1153" y="480.2" font-size="9.5" fill="#e6e6e6" textLength="22" lengthAdjust="spacingAndGlyphs">100%</text>
<path d="M1188 476 L1190.5 478.5 L1193 476" fill="none" stroke="#bbb" stroke-width="1"/>
<rect x="1149" y="484" width="47" height="1" fill="#6a6a6a" />
<rect x="989" y="489.5" width="211" height="1" fill="#4a4a4a" />
<text x="994" y="504.1" font-size="9.5" fill="#c8c8c8" textLength="20.5" lengthAdjust="spacingAndGlyphs">Lock:</text>
<rect x="1023.5" y="495.5" width="10" height="10" fill="none" stroke="#999" stroke-width="1"/><rect x="1024.0" y="496.0" width="2.2" height="2.2" fill="#999"/><rect x="1024.0" y="500.4" width="2.2" height="2.2" fill="#999"/><rect x="1026.2" y="498.2" width="2.2" height="2.2" fill="#999"/><rect x="1026.2" y="502.6" width="2.2" height="2.2" fill="#999"/><rect x="1028.4" y="496.0" width="2.2" height="2.2" fill="#999"/><rect x="1028.4" y="500.4" width="2.2" height="2.2" fill="#999"/><rect x="1030.6" y="498.2" width="2.2" height="2.2" fill="#999"/><rect x="1030.6" y="502.6" width="2.2" height="2.2" fill="#999"/>
<path d="M1043 505 L1053 495" stroke="#999" stroke-width="2"/>
<path d="M1066.5 494 v12 M1060.5 500 h12 M1064.5 496 l2 -2 l2 2 M1064.5 504 l2 2 l2 -2 M1062.5 498 l-2 2 l2 2 M1070.5 498 l2 2 l-2 2" fill="none" stroke="#ddd" stroke-width="1.2"/>
<path d="M1080 497.5 h12 M1082.5 495 v11 M1090.5 495 v11 M1080 503.5 h12" fill="none" stroke="#ddd" stroke-width="1.1"/>
<path d="M1103.5 499 v-2 a2.5 2.5 0 0 1 5 0 v2" fill="none" stroke="#ddd" stroke-width="1.2"/><rect x="1101.5" y="499" width="9" height="7" fill="#ddd"/>
<text x="1133" y="504.2" font-size="9.5" fill="#c8c8c8" textLength="12.5" lengthAdjust="spacingAndGlyphs">Fill:</text>
<text x="1153" y="504.2" font-size="9.5" fill="#e6e6e6" textLength="22" lengthAdjust="spacingAndGlyphs">100%</text>
<path d="M1188 500 L1190.5 502.5 L1193 500" fill="none" stroke="#bbb" stroke-width="1"/>
<rect x="1149" y="508" width="47" height="1" fill="#6a6a6a" />
<rect x="989" y="512" width="211" height="1" fill="#4a4a4a" />
<rect x="989" y="513" width="198" height="103" fill="#474747" />
<rect x="989" y="513.5" width="198" height="33.5" fill="#535353" />
<rect x="1015" y="513.5" width="1" height="33.5" fill="#474747" />
<path d="M997 530.25 Q1002.8 524.25 1008.6 530.25 Q1002.8 536.25 997 530.25 Z" fill="#e2e2e2"/><circle cx="1002.8" cy="530.25" r="2.3" fill="#4a4a4a"/><circle cx="1002.3" cy="529.65" r="0.7" fill="#999"/>
<path d="M1019.5 545.0 V517.5 H1032.5 V533.0 H1021.5 V545.0" fill="none" stroke="#2a2a2a" stroke-width="1"/>
<rect x="1020" y="518.0" width="12" height="15" fill="#ffffff" />
<rect x="1020" y="521.0" width="3" height="3" fill="#d0d0d0" />
<rect x="1020" y="527.0" width="3" height="3" fill="#d0d0d0" />
<rect x="1023" y="518.0" width="3" height="3" fill="#d0d0d0" />
<rect x="1023" y="524.0" width="3" height="3" fill="#d0d0d0" />
<rect x="1023" y="530.0" width="3" height="3" fill="#d0d0d0" />
<rect x="1026" y="521.0" width="3" height="3" fill="#d0d0d0" />
<rect x="1026" y="527.0" width="3" height="3" fill="#d0d0d0" />
<rect x="1029" y="518.0" width="3" height="3" fill="#d0d0d0" />
<rect x="1029" y="524.0" width="3" height="3" fill="#d0d0d0" />
<rect x="1029" y="530.0" width="3" height="3" fill="#d0d0d0" />
<rect x="1020" y="533.0" width="1.5" height="12" fill="#f0f0f0" />
<rect x="1023" y="535.0" width="8" height="8" rx="1" fill="none" stroke="#cfcfcf" stroke-width="2"/><rect x="1025" y="537.0" width="4" height="4" fill="#555"/>
<circle cx="1023" cy="535.0" r="1.3" fill="#d8d8d8"/>
<circle cx="1031" cy="535.0" r="1.3" fill="#d8d8d8"/>
<circle cx="1023" cy="543.0" r="1.3" fill="#d8d8d8"/>
<circle cx="1031" cy="543.0" r="1.3" fill="#d8d8d8"/>
<text x="1041.8" y="535.7" font-size="9.7" fill="#ececec" textLength="31.7" lengthAdjust="spacingAndGlyphs">Shape 1</text>
<rect x="989" y="549" width="198" height="33" fill="#535353" />
<rect x="1016" y="549" width="19" height="33" fill="#5a5a5a" />
<rect x="1035" y="549" width="152" height="33" fill="#6a6a6a" />
<rect x="1015" y="549" width="1" height="33" fill="#474747" />
<path d="M997 565.5 Q1002.8 559.5 1008.6 565.5 Q1002.8 571.5 997 565.5 Z" fill="#e2e2e2"/><circle cx="1002.8" cy="565.5" r="2.3" fill="#4a4a4a"/><circle cx="1002.3" cy="564.9" r="0.7" fill="#999"/>
<path d="M1019.5 580.5 V553.0 H1032.5 V568.5 H1021.5 V580.5" fill="none" stroke="#2a2a2a" stroke-width="1"/>
<rect x="1020" y="553.5" width="12" height="15" fill="#ffffff" />
<rect x="1020" y="556.5" width="3" height="3" fill="#d0d0d0" />
<rect x="1020" y="562.5" width="3" height="3" fill="#d0d0d0" />
<rect x="1023" y="553.5" width="3" height="3" fill="#d0d0d0" />
<rect x="1023" y="559.5" width="3" height="3" fill="#d0d0d0" />
<rect x="1023" y="565.5" width="3" height="3" fill="#d0d0d0" />
<rect x="1026" y="556.5" width="3" height="3" fill="#d0d0d0" />
<rect x="1026" y="562.5" width="3" height="3" fill="#d0d0d0" />
<rect x="1029" y="553.5" width="3" height="3" fill="#d0d0d0" />
<rect x="1029" y="559.5" width="3" height="3" fill="#d0d0d0" />
<rect x="1029" y="565.5" width="3" height="3" fill="#d0d0d0" />
<rect x="1020" y="568.5" width="1.5" height="12" fill="#f0f0f0" />
<rect x="1023" y="570.5" width="8" height="8" rx="1" fill="none" stroke="#cfcfcf" stroke-width="2"/><rect x="1025" y="572.5" width="4" height="4" fill="#555"/>
<circle cx="1023" cy="570.5" r="1.3" fill="#d8d8d8"/>
<circle cx="1031" cy="570.5" r="1.3" fill="#d8d8d8"/>
<circle cx="1023" cy="578.5" r="1.3" fill="#d8d8d8"/>
<circle cx="1031" cy="578.5" r="1.3" fill="#d8d8d8"/>
<path d="M1017.5 556 v-5.5 h5 M1030 550.5 h5 v5.5 M1017.5 575 v5.5 h5 M1030 580.5 h5 v-5.5" fill="none" stroke="#f2f2f2" stroke-width="1.1"/>
<text x="1041.8" y="569.7" font-size="9.7" fill="#ececec" textLength="45.2" lengthAdjust="spacingAndGlyphs">Rectangle 3</text>
<rect x="989" y="583.5" width="198" height="32.5" fill="#535353" />
<rect x="1015" y="583.5" width="1" height="32.5" fill="#474747" />
<path d="M997 599.75 Q1002.8 593.75 1008.6 599.75 Q1002.8 605.75 997 599.75 Z" fill="#e2e2e2"/><circle cx="1002.8" cy="599.75" r="2.3" fill="#4a4a4a"/><circle cx="1002.3" cy="599.15" r="0.7" fill="#999"/>
<path d="M1019.5 615.0 V587.5 H1032.5 V603.0 H1021.5 V615.0" fill="none" stroke="#2a2a2a" stroke-width="1"/>
<rect x="1020" y="588.0" width="12" height="15" fill="#ffffff" />
<rect x="1020" y="591.0" width="3" height="3" fill="#d0d0d0" />
<rect x="1020" y="597.0" width="3" height="3" fill="#d0d0d0" />
<rect x="1023" y="588.0" width="3" height="3" fill="#d0d0d0" />
<rect x="1023" y="594.0" width="3" height="3" fill="#d0d0d0" />
<rect x="1023" y="600.0" width="3" height="3" fill="#d0d0d0" />
<rect x="1026" y="591.0" width="3" height="3" fill="#d0d0d0" />
<rect x="1026" y="597.0" width="3" height="3" fill="#d0d0d0" />
<rect x="1029" y="588.0" width="3" height="3" fill="#d0d0d0" />
<rect x="1029" y="594.0" width="3" height="3" fill="#d0d0d0" />
<rect x="1029" y="600.0" width="3" height="3" fill="#d0d0d0" />
<rect x="1020" y="603.0" width="1.5" height="12" fill="#f0f0f0" />
<rect x="1023" y="605.0" width="8" height="8" rx="1" fill="none" stroke="#cfcfcf" stroke-width="2"/><rect x="1025" y="607.0" width="4" height="4" fill="#555"/>
<circle cx="1023" cy="605.0" r="1.3" fill="#d8d8d8"/>
<circle cx="1031" cy="605.0" r="1.3" fill="#d8d8d8"/>
<circle cx="1023" cy="613.0" r="1.3" fill="#d8d8d8"/>
<circle cx="1031" cy="613.0" r="1.3" fill="#d8d8d8"/>
<text x="1041.8" y="603.7" font-size="9.7" fill="#ececec" textLength="45.2" lengthAdjust="spacingAndGlyphs">Rectangle 2</text>
<rect x="989" y="547" width="198" height="2" fill="#4a4a4a" />
<rect x="989" y="582" width="198" height="1.5" fill="#4a4a4a" />
<rect x="1187" y="513" width="13" height="103" fill="#535353" />
<path d="M1189.5 525 L1192.5 522 L1195.5 525" fill="none" stroke="#999" stroke-width="1"/>
<rect x="1188" y="529" width="9" height="36" fill="#646464" />
<path d="M1189.5 607 L1192.5 610 L1195.5 607" fill="none" stroke="#999" stroke-width="1"/>
<rect x="989" y="616" width="211" height="1" fill="#454545" />
<rect x="1021" y="625" width="6.5" height="5.5" rx="2.75" fill="none" stroke="#8a8a8a" stroke-width="1.3"/><rect x="1026.5" y="625" width="6.5" height="5.5" rx="2.75" fill="none" stroke="#8a8a8a" stroke-width="1.3"/><path d="M1024.5 627.75 h5" stroke="#8a8a8a" stroke-width="1.2"/>
<text x="1046" y="632" font-size="12" font-style="italic" fill="#ddd" font-family="Liberation Serif" textLength="10" lengthAdjust="spacingAndGlyphs">fx</text><path d="M1057 636 l1.5 1.5 l1.5 -1.5z" fill="#ddd"/>
<rect x="1068" y="622.5" width="12" height="9.5" fill="#ddd"/><circle cx="1074" cy="627.2" r="2.8" fill="#444"/>
<circle cx="1098.5" cy="628" r="4.8" fill="none" stroke="#ddd" stroke-width="1.2"/><path d="M1095.1 631.4 A4.8 4.8 0 0 0 1101.9 624.6 Z" fill="#ddd"/><path d="M1105 636 l1.5 1.5 l1.5 -1.5z" fill="#ddd"/>
<path d="M1116 623 h4 l1 1.5 h7 v8 h-12 z" fill="#ddd"/>
<path d="M1141.6 624.6 H1149.8 V632.8 H1144.2 L1141.6 630.2 Z" fill="none" stroke="#e0e0e0" stroke-width="1.2"/><rect x="1144" y="626.5" width="4" height="4" fill="#2a2a2a"/><path d="M1143 629.5 h2.5 v2.5" fill="none" stroke="#e0e0e0" stroke-width="1"/>
<path d="M1165.5 626 V633.6 H1172.5 V626 M1164 625.3 H1174 M1167.3 625 V623.4 H1170.7 V625" fill="none" stroke="#e0e0e0" stroke-width="1.2"/><rect x="1167" y="627" width="1.6" height="5.5" fill="#bbb"/><rect x="1169.6" y="627" width="1.6" height="5.5" fill="#bbb"/>
<path d="M25 99.5 L28 99.5 L28 96.5 Z" fill="#bdbdbd"/>
<path d="M55 99.5 L58 99.5 L58 96.5 Z" fill="#bdbdbd"/>
<path d="M25 122 L28 122 L28 119 Z" fill="#bdbdbd"/>
<path d="M55 122 L58 122 L58 119 Z" fill="#bdbdbd"/>
<path d="M25 144 L28 144 L28 141 Z" fill="#bdbdbd"/>
<path d="M55 144 L58 144 L58 141 Z" fill="#bdbdbd"/>
<path d="M25 167 L28 167 L28 164 Z" fill="#bdbdbd"/>
<path d="M55 167 L58 167 L58 164 Z" fill="#bdbdbd"/>
<path d="M25 190 L28 190 L28 187 Z" fill="#bdbdbd"/>
<path d="M55 190 L58 190 L58 187 Z" fill="#bdbdbd"/>
<path d="M25 213 L28 213 L28 210 Z" fill="#bdbdbd"/>
<path d="M55 213 L58 213 L58 210 Z" fill="#bdbdbd"/>
<path d="M25 236 L28 236 L28 233 Z" fill="#bdbdbd"/>
<path d="M55 236 L58 236 L58 233 Z" fill="#bdbdbd"/>
<path d="M25 259 L28 259 L28 256 Z" fill="#bdbdbd"/>
<path d="M55 259 L58 259 L58 256 Z" fill="#bdbdbd"/>
<path d="M25 282 L28 282 L28 279 Z" fill="#bdbdbd"/>
<path d="M55 282 L58 282 L58 279 Z" fill="#bdbdbd"/>
<path d="M25 305 L28 305 L28 302 Z" fill="#bdbdbd"/>
<path d="M25 328 L28 328 L28 325 Z" fill="#bdbdbd"/>
<path d="M55 397.5 L58 397.5 L58 394.5 Z" fill="#bdbdbd"/>
<path d="M16.3 85 L19 88 H17.1 V90.8 H19.9 V88.9 L23 91.6 L19.9 94.3 V92.4 H17.1 V95.2 H19 L16.3 98.7 L13.6 95.2 H15.5 V92.4 H12.7 V94.3 L9.6 91.6 L12.7 88.9 V90.8 H15.5 V88 H13.6 Z" fill="#dcdcdc"/>
<rect x="38.8" y="85.5" width="14" height="11.5" fill="none" stroke="#dcdcdc" stroke-width="1.3" stroke-dasharray="3 2"/>
<ellipse cx="17.5" cy="113.3" rx="7.2" ry="5" fill="none" stroke="#dcdcdc" stroke-width="1.3"/><path d="M12 117 q3 1 2 3 q-1 1.5 0.5 2.5" fill="none" stroke="#dcdcdc" stroke-width="1.3"/>
<path d="M44.5 110 A5 6 0 1 0 43 120.5" fill="none" stroke="#dcdcdc" stroke-width="1.2" stroke-dasharray="1.2 1.2"/><path d="M54.5 109 L48 115.5 L50 117.5 Z" fill="#dcdcdc"/><path d="M47 116 Q43.5 116.5 43.5 121 Q48.5 121 49.5 118 Z" fill="#dcdcdc"/>
<path d="M12.6 129.2 V141.3 H20.3 M8 132.3 H10.2 M12.6 132.3 H20.3 V144.2 M22.4 141.3 H24.6" fill="none" stroke="#dcdcdc" stroke-width="1.4"/>
<path d="M40.5 144 L38.8 142.3 L47 134 L48.8 135.8 Z" fill="none" stroke="#dcdcdc" stroke-width="1.1"/><path d="M46 132 L51 137 L49.8 138.2 L44.8 133.2 Z M48 134 L51 131 Q52.5 130 53 131.5 Q53.3 133 52 134 L49.5 136.5 Z" fill="#dcdcdc"/>
<path d="M9 164.5 L20.5 153 L25 157.5 L13.5 169 Z" fill="#dcdcdc"/><rect x="14" y="158" width="5.5" height="5.5" transform="rotate(-45 16.75 160.75)" fill="#555"/><path d="M15.2 160.7 h3.1 M16.75 159.2 v3.1" stroke="#dcdcdc" stroke-width="0.9"/><path d="M8.7 158 A4 4 0 0 1 14.5 153" fill="none" stroke="#dcdcdc" stroke-width="1" stroke-dasharray="1 1"/>
<path d="M52 153 L45.5 161.5 L43.5 159.8 Z" fill="#dcdcdc"/><path d="M43 160.5 Q39.5 161 39 166.5 Q44.5 166 45 162.3 Z" fill="#dcdcdc"/>
<circle cx="17.2" cy="179.2" r="2.8" fill="#dcdcdc"/><rect x="16" y="181" width="2.6" height="3" fill="#dcdcdc"/><path d="M11 188 Q11 184 14 184 H20.5 Q23.5 184 23.5 188 Z" fill="#dcdcdc"/><rect x="12" y="189" width="10.5" height="1.4" fill="#dcdcdc"/>
<path d="M53 176.5 L46.5 184.5 L44.7 183 Z" fill="#dcdcdc"/><path d="M44 183.8 Q40.5 184 40 190 Q45.5 189.5 46 185.5 Z" fill="#dcdcdc"/><path d="M38 181 L41 178 L42 181 Z" fill="#dcdcdc"/><path d="M41 179.5 Q44 177 48 178" fill="none" stroke="#dcdcdc" stroke-width="1"/><path d="M52 181 l-1 3 M50 186 l-1 1.5" stroke="#dcdcdc" stroke-width="0.9" stroke-dasharray="1 1"/>
<path d="M15.5 203.5 L10.5 208.5 L14.5 212.5 H24 M14.5 212.5 L19.5 207.5" fill="none" stroke="#dcdcdc" stroke-width="1.2"/><path d="M15.5 203.5 L19 200 L24 205 L19.5 209.5 Z" fill="#dcdcdc"/>
<path d="M39 206 L45 200 L51 206 L45 212 Z" fill="none" stroke="#dcdcdc" stroke-width="1.2"/><path d="M42.5 199 L46.5 204" stroke="#dcdcdc" stroke-width="1.2"/><path d="M52.5 208 Q51 210.5 52 211.5 Q53.5 211.5 53.5 210 Z" fill="#dcdcdc"/><circle cx="52.3" cy="210.3" r="1.4" fill="#dcdcdc"/>
<path d="M16.7 221.7 Q14 226 12.5 229.5 A4.4 4.4 0 0 0 21 229.5 Q19.5 226 16.7 221.7 Z" fill="#dcdcdc"/>
<circle cx="47.3" cy="227" r="4.8" fill="#dcdcdc"/><path d="M43.8 230.8 L39.2 235.5" stroke="#dcdcdc" stroke-width="1.3"/>
<path d="M10.5 258.5 L12.5 251 L19 245.5 L23.5 250 L18 256.5 Z" fill="none" stroke="#dcdcdc" stroke-width="1.1"/><path d="M19 245.5 L20.5 244 L25 248.5 L23.5 250 Z" fill="#dcdcdc"/><path d="M10.5 258.5 L16 253" stroke="#dcdcdc" stroke-width="0.9"/><circle cx="16.3" cy="252.7" r="1" fill="#dcdcdc"/>
<path d="M41 245.3 H52.2 V248.2 H51 V246.9 H47.5 V256.5 H49.3 V258 H43.9 V256.5 H45.7 V246.9 H42.2 V248.2 H41 Z" fill="#dcdcdc"/>
<path d="M13.5 267.5 L21.8 275.5 L18.5 275.8 L20.8 280.5 L19 281.3 L16.8 276.6 L13.5 279 Z" fill="#111" stroke="#dcdcdc" stroke-width="1.1" stroke-linejoin="round"/>
<rect x="38.8" y="268.5" width="13.8" height="11" fill="#4a4a4a" stroke="#dcdcdc" stroke-width="1.3"/>
<path d="M14 303 Q10 299 9.6 296.5 Q10.5 295.3 12 296.3 L13.5 298 V291 Q14.3 289.8 15.3 291 V289.5 Q16.2 288.5 17.1 289.5 V290.5 Q18 289.5 19 290.5 V292 Q20 291 21 292 V300 Q21 303 19.5 305 H14.5 Z" fill="#dcdcdc"/>
<rect x="33" y="287" width="26" height="21.5" fill="#333333" />
<circle cx="44" cy="295.5" r="5" fill="none" stroke="#dcdcdc" stroke-width="1.3"/><path d="M47.5 299 L52.5 304" stroke="#dcdcdc" stroke-width="1.8"/><path d="M42 292.5 Q44.5 291.8 46 293.5" fill="none" stroke="#dcdcdc" stroke-width="0.8"/>
<circle cx="11.4" cy="320" r="2" fill="#dcdcdc"/>
<circle cx="16.7" cy="320" r="2" fill="#dcdcdc"/>
<circle cx="22" cy="320" r="2" fill="#dcdcdc"/>
<rect x="28.5" y="351.5" width="22" height="22.5" fill="#2a2a2a" />
<rect x="29.5" y="352.5" width="20" height="20.5" fill="#f2f2f2" />
<rect x="30.5" y="353.5" width="18" height="18.5" fill="#d95e5e" />
<rect x="15.2" y="337" width="22.5" height="23.3" fill="#2a2a2a" />
<rect x="16" y="337.8" width="21" height="21.7" fill="#f2f2f2" />
<rect x="17" y="338.8" width="19" height="19.7" fill="#d4d4d4" />
<path d="M45.5 339.7 H50 V343.5" fill="none" stroke="#dcdcdc" stroke-width="1.1"/><path d="M43.3 339.7 L46 337.3 V342.1 Z M50 346 L47.7 343.3 H52.3 Z" fill="#dcdcdc"/>
<rect x="17" y="369" width="6" height="6" fill="#f0f0f0" />
<rect x="14" y="366" width="6" height="6" fill="#f0f0f0" />
<rect x="15" y="367" width="4" height="4" fill="#111" />
<rect x="9.5" y="386.5" width="14" height="10.5" fill="#3a3a3a" stroke="#dcdcdc" stroke-width="1.1"/><circle cx="16.5" cy="391.7" r="3.2" fill="none" stroke="#dcdcdc" stroke-width="0.9" stroke-dasharray="1 1"/>
<rect x="42" y="386.3" width="10.5" height="7.5" fill="#444" stroke="#dcdcdc" stroke-width="1.1"/><path d="M41.5 390 H38.5 V397 H47 V394" fill="none" stroke="#dcdcdc" stroke-width="1.1"/>
<rect x="965" y="79" width="5" height="4.3" fill="#dcdcdc"/><circle cx="967.5" cy="81.15" r="1.2" fill="#333"/><rect x="965" y="84.5" width="5" height="4.3" fill="#dcdcdc"/><circle cx="967.5" cy="86.65" r="1.2" fill="#333"/><rect x="965" y="90" width="5" height="4" fill="#dcdcdc"/>
<path d="M972.3 80 L977.3 80.3 L973.3 84.8 Z" fill="#dcdcdc"/><path d="M974.5 82 Q979.3 84 978.6 88 Q977.8 91.8 973.5 93.5" fill="none" stroke="#dcdcdc" stroke-width="1.5"/>
<path d="M963.5 116.5 L967 114.7 L970.5 116.5 V120.5 L967 122.3 L963.5 120.5 Z M963.5 116.5 L967 118.3 L970.5 116.5 M967 118.3 V122.3" fill="none" stroke="#dcdcdc" stroke-width="1"/><rect x="974" y="115" width="3.5" height="3" fill="#dcdcdc"/><rect x="974" y="119.5" width="3.5" height="3" fill="#dcdcdc"/><rect x="964" y="125" width="13.5" height="3.5" fill="none" stroke="#dcdcdc" stroke-width="1"/><path d="M973.5 126 l1.2 1.5 l1.2 -1.5 z" fill="#dcdcdc"/>
<path d="M963.5 152 L968.5 151.5 L976.5 164 L970.5 165.5 Z" fill="none" stroke="#dcdcdc" stroke-width="1.1"/><rect x="963.5" y="155" width="4" height="6" fill="none" stroke="#dcdcdc" stroke-width="1"/><rect x="974" y="158" width="4" height="6" fill="none" stroke="#dcdcdc" stroke-width="1"/><path d="M975 159.5 L977 162.5" stroke="#dcdcdc" stroke-width="0.9"/>
<rect x="65" y="638.5" width="1135" height="1.5" fill="#3e3e3e" />
</svg></body></html>
